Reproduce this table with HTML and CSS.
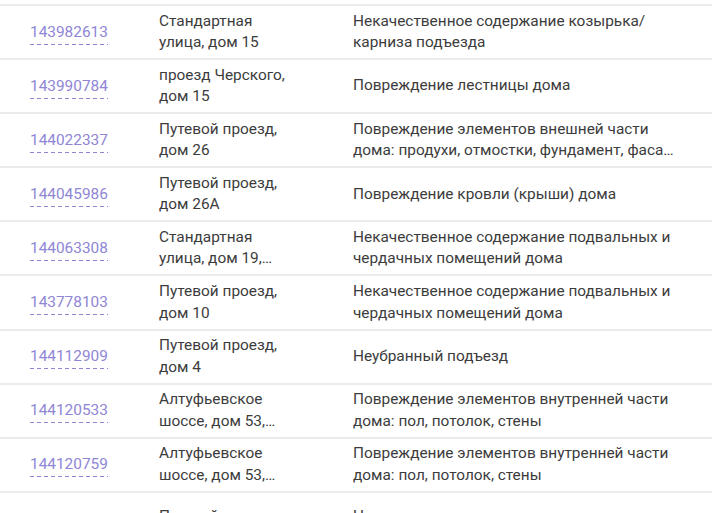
FILE: index.html
```html
<!DOCTYPE html>
<html lang="ru">
<head>
<meta charset="utf-8">
<link rel="stylesheet" href="styles.css">
</head>
<body>
<div class="list">
  <div class="row">
    <div class="c-id"><a class="id">143982613</a></div>
    <div class="c-addr"><span class="clamp">Стандартная улица, дом 15</span></div>
    <div class="c-desc"><span class="clamp">Некачественное содержание козырька/ карниза подъезда</span></div>
  </div>
  <div class="row">
    <div class="c-id"><a class="id">143990784</a></div>
    <div class="c-addr"><span class="clamp">проезд Черского, дом 15</span></div>
    <div class="c-desc"><span class="clamp">Повреждение лестницы дома</span></div>
  </div>
  <div class="row">
    <div class="c-id"><a class="id">144022337</a></div>
    <div class="c-addr"><span class="clamp">Путевой проезд, дом 26</span></div>
    <div class="c-desc"><span class="clamp">Повреждение элементов внешней части дома: продухи, отмостки, фундамент, фаса…</span></div>
  </div>
  <div class="row">
    <div class="c-id"><a class="id">144045986</a></div>
    <div class="c-addr"><span class="clamp">Путевой проезд, дом 26А</span></div>
    <div class="c-desc"><span class="clamp">Повреждение кровли (крыши) дома</span></div>
  </div>
  <div class="row">
    <div class="c-id"><a class="id">144063308</a></div>
    <div class="c-addr"><span class="clamp">Стандартная улица, дом 19,…</span></div>
    <div class="c-desc"><span class="clamp">Некачественное содержание подвальных и чердачных помещений дома</span></div>
  </div>
  <div class="row">
    <div class="c-id"><a class="id">143778103</a></div>
    <div class="c-addr"><span class="clamp">Путевой проезд, дом 10</span></div>
    <div class="c-desc"><span class="clamp">Некачественное содержание подвальных и чердачных помещений дома</span></div>
  </div>
  <div class="row">
    <div class="c-id"><a class="id">144112909</a></div>
    <div class="c-addr"><span class="clamp">Путевой проезд, дом 4</span></div>
    <div class="c-desc"><span class="clamp">Неубранный подъезд</span></div>
  </div>
  <div class="row">
    <div class="c-id"><a class="id">144120533</a></div>
    <div class="c-addr"><span class="clamp">Алтуфьевское шоссе, дом 53,…</span></div>
    <div class="c-desc"><span class="clamp">Повреждение элементов внутренней части дома: пол, потолок, стены</span></div>
  </div>
  <div class="row">
    <div class="c-id"><a class="id">144120759</a></div>
    <div class="c-addr"><span class="clamp">Алтуфьевское шоссе, дом 53,…</span></div>
    <div class="c-desc"><span class="clamp">Повреждение элементов внутренней части дома: пол, потолок, стены</span></div>
  </div>
  <div class="row row--tall">
    <div class="c-id"><a class="id">144131120</a></div>
    <div class="c-addr"><span class="clamp">Путевой проезд, дом 30</span></div>
    <div class="c-desc"><span class="clamp">Некачественное содержание подвальных и чердачных помещений дома</span></div>
  </div>
</div>
</body>
</html>
```
FILE: styles.css
```css
html, body {
  margin: 0;
  padding: 0;
  background: #ffffff;
  overflow: hidden;
  height: 513px;
}

body {
  font-family: Roboto, "Noto Sans", "Liberation Sans", sans-serif;
  color: #3c3c3c;
}

.list {
  padding-top: 4px;
  width: 712px;
}

.row {
  display: flex;
  align-items: center;
  height: 54.1px;
  box-sizing: border-box;
  border-top: 2px solid #ebebeb;
}

.row--tall {
  padding-top: 11px;
  height: 60px;
}

.c-id {
  width: 159px;
  flex: none;
  box-sizing: border-box;
  padding-left: 30px;
  padding-top: 2px;
}

.id {
  display: inline-block;
  font-size: 15.4px;
  line-height: 18px;
  color: #8f86d5;
  padding-bottom: 4px;
  background-image: repeating-linear-gradient(to right, #8f86d5 0 4px, transparent 4px 7px);
  background-size: 100% 1px;
  background-repeat: no-repeat;
  background-position: left bottom;
  cursor: pointer;
}

.c-addr {
  width: 194px;
  flex: none;
  box-sizing: border-box;
  padding-right: 62px;
}

.c-desc {
  width: 330px;
  flex: none;
}

.clamp {
  display: -webkit-box;
  -webkit-box-orient: vertical;
  -webkit-line-clamp: 2;
  overflow: hidden;
  font-size: 15.4px;
  line-height: 21.5px;
}
```
